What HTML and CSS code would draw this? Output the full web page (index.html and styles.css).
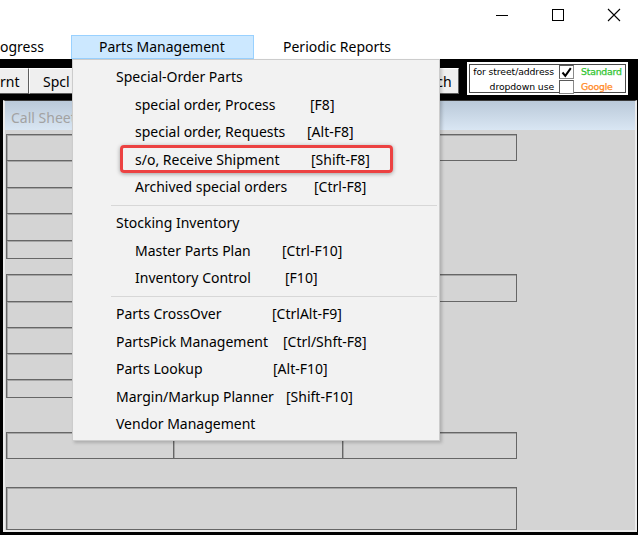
FILE: index.html
```html
<!DOCTYPE html>
<html>
<head>
<meta charset="utf-8">
<link rel="stylesheet" href="styles.css">
</head>
<body>
<div class="app">
  <div class="titlebar">
    <div class="winbtn"><svg width="14" height="14" viewBox="0 0 14 14"><line x1="1" y1="7.5" x2="13" y2="7.5" stroke="#000" stroke-width="1"/></svg></div>
    <div class="winbtn"><svg width="14" height="14" viewBox="0 0 14 14"><rect x="1.5" y="1.5" width="11" height="11" fill="none" stroke="#000" stroke-width="1"/></svg></div>
    <div class="winbtn"><svg width="14" height="14" viewBox="0 0 14 14"><path d="M1 1 L13 13 M13 1 L1 13" stroke="#000" stroke-width="1.1" fill="none"/></svg></div>
  </div>

  <div class="menubar">
    <div class="mb-item mb-first">ogress</div>
    <div class="mb-item mb-active">Parts Management</div>
    <div class="mb-item mb-last">Periodic Reports</div>
  </div>

  <div class="toolbar">
    <div class="tbtn tbtn-prnt">rnt</div>
    <div class="tbtn tbtn-spcl">Spcl</div>
    <div class="tb-spacer"></div>
    <div class="tbtn tbtn-search">Search</div>
    <div class="addr">
      <div class="addr-in">
        <div class="addr-txt">for street/address</div>
        <div class="chk"><svg width="11" height="11" viewBox="0 0 11 11"><path d="M1.5 5.5 L4.3 8.8 L9.8 1.2" stroke="#000" stroke-width="2" fill="none"/></svg></div>
        <div class="addr-std">Standard</div>
        <div class="addr-txt">dropdown use</div>
        <div class="chk"></div>
        <div class="addr-ggl">Google</div>
      </div>
    </div>
  </div>

  <div class="mdi">
    <div class="child">
      <div class="child-title">Call Sheet</div>
      <div class="child-body">
        <div class="grp g1">
          <div class="fld wide h27"></div>
          <div class="fld narrow h28"></div>
          <div class="fld narrow h27"></div>
          <div class="fld narrow h28"></div>
          <div class="fld narrow h19"></div>
        </div>
        <div class="grp g2">
          <div class="fld wide h28"></div>
          <div class="fld narrow h27"></div>
          <div class="fld narrow h27"></div>
          <div class="fld narrow h27"></div>
          <div class="fld narrow h19"></div>
        </div>
        <div class="grp g3">
          <div class="fld c1 h27"></div>
          <div class="fld c2 h27"></div>
          <div class="fld c3 h27"></div>
        </div>
        <div class="grp g4">
          <div class="fld wide h43"></div>
        </div>
      </div>
    </div>
  </div>

  <div class="dropdown">
    <div class="mi">Special-Order Parts</div>
    <div class="mi sub"><span class="lbl w175">special order, Process</span><span>[F8]</span></div>
    <div class="mi sub"><span class="lbl w172">special order, Requests</span><span>[Alt-F8]</span></div>
    <div class="mi sub"><span class="lbl w176">s/o, Receive Shipment</span><span>[Shift-F8]</span></div>
    <div class="mi sub"><span class="lbl w179">Archived special orders</span><span>[Ctrl-F8]</span></div>
    <div class="sep"></div>
    <div class="mi">Stocking Inventory</div>
    <div class="mi sub"><span class="lbl w147">Master Parts Plan</span><span>[Ctrl-F10]</span></div>
    <div class="mi sub"><span class="lbl w150">Inventory Control</span><span>[F10]</span></div>
    <div class="sep"></div>
    <div class="mi"><span class="lbl w156">Parts CrossOver</span><span>[CtrlAlt-F9]</span></div>
    <div class="mi"><span class="lbl w167">PartsPick Management</span><span>[Ctrl/Shft-F8]</span></div>
    <div class="mi"><span class="lbl w157">Parts Lookup</span><span>[Alt-F10]</span></div>
    <div class="mi"><span class="lbl w170">Margin/Markup Planner</span><span>[Shift-F10]</span></div>
    <div class="mi">Vendor Management</div>
    <div class="callout"></div>
  </div>
</div>
</body>
</html>
```
FILE: styles.css
```css
* { box-sizing: border-box; }
html, body { margin: 0; padding: 0; }
body {
  width: 638px;
  height: 535px;
  overflow: hidden;
  background: #000;
  font-family: "Noto Sans", sans-serif;
  font-size: 14px;
  color: #000;
}
.app { position: relative; width: 638px; height: 535px; overflow: hidden; }

/* title bar */
.titlebar {
  height: 35px;
  background: #fff;
  display: flex;
  justify-content: flex-end;
  margin-right: -4px;
}
.winbtn {
  width: 56px;
  height: 30px;
  display: flex;
  align-items: center;
  justify-content: center;
}
.winbtn svg { display: block; }

/* menu bar */
.menubar {
  height: 24px;
  background: #fff;
  display: flex;
  font-size: 14px;
}
.mb-item {
  display: flex;
  align-items: center;
  border: 1px solid transparent;
  white-space: nowrap;
  padding-bottom: 1px;
}
.mb-first { width: 72px; margin-left: -1px; padding-left: 0; }
.mb-active {
  width: 183px;
  padding-left: 27px;
  background: #cce8ff;
  border-color: #99d1ff;
}
.mb-last { padding-left: 28px; }

/* toolbar */
.toolbar {
  height: 41px;
  background: #000;
  display: flex;
  align-items: flex-start;
}
.tbtn {
  margin-top: 9px;
  height: 26px;
  background: #efefef;
  border: 1px solid;
  border-color: #fdfdfd #5e5e5e #5e5e5e #fdfdfd;
  display: flex;
  align-items: center;
  white-space: nowrap;
  overflow: hidden;
  font-size: 14px;
}
.tbtn-prnt { width: 30px; margin-left: -1px; padding-left: 0; }
.tbtn-spcl { width: 80px; padding-left: 13px; }
.tb-spacer { flex: 1; }
.tbtn-search { width: 59px; justify-content: center; }
.addr {
  margin-left: 8px;
  margin-right: 10px;
  margin-top: 3px;
  width: 161px;
  height: 33px;
  background: #fff;
  padding: 2px;
}
.addr-in {
  height: 100%;
  border: 1px solid #4a4a4a;
  display: grid;
  grid-template-columns: 84px 15px 1fr;
  grid-template-rows: 14px 14px;
  column-gap: 0;
  row-gap: 1px;
  align-items: center;
  font-family: "DejaVu Sans", sans-serif;
  font-size: 9.3px;
  line-height: 10px;
}
.addr-txt { text-align: right; padding-right: 0; white-space: nowrap; letter-spacing: -0.1px; }
.chk {
  margin-left: 5px;
  width: 15px;
  height: 14px;
  border: 1px solid #8a8a8a;
  border-top-color: #5a5a5a;
  border-left-color: #5a5a5a;
  background: #fff;
  display: flex;
  align-items: center;
  justify-content: center;
}
.addr-std, .addr-ggl { padding-left: 12px; white-space: nowrap; letter-spacing: -0.2px; -webkit-text-stroke: 0.25px; }
.addr-std { color: #2fc42f; }
.addr-ggl { color: #ff8a26; }

/* MDI area */
.mdi {
  height: 435px;
  background: #000;
  padding: 0 1px 3px 3px;
}
.child {
  width: 634px;
  height: 432px;
  border: 2px solid #ebebeb;
  border-top: 1px solid #3a3a3a;
  display: flex;
  flex-direction: column;
}
.child-title {
  height: 29px;
  background: linear-gradient(#bac9d9, #d9e6f3);
  color: #a2a2a2;
  font-size: 14px;
  line-height: 20px;
  padding: 7px 0 0 6px;
  white-space: nowrap;
}
.child-body {
  flex: 1;
  background: #d4d4d4;
  padding: 4px 0 0 1px;
  display: flex;
  flex-direction: column;
}
.grp { display: flex; flex-direction: column; }
.g2 { margin-top: 15px; }
.g3 { margin-top: 34px; flex-direction: row; }
.g4 { margin-top: 28px; }
.fld {
  border: 1px solid #666;
  box-shadow: inset 1px 1px 0 #a5a5a5;
  background: #d4d4d4;
}
.g1 .fld + .fld, .g2 .fld + .fld { margin-top: -1px; }
.g3 .fld + .fld { margin-left: -1px; }
.wide { width: 511px; }
.narrow { width: 300px; }
.c1 { width: 168px; }
.c2 { width: 170px; }
.c3 { width: 175px; }
.h19 { height: 19px; }
.h27 { height: 27px; }
.h28 { height: 28px; }
.h43 { height: 43px; }

/* dropdown menu */
.dropdown {
  position: absolute;
  left: 72px;
  top: 59px;
  width: 368px;
  background: #f2f2f2;
  border: 1px solid #cccccc;
  padding: 3px 0 2px;
  box-shadow: 2px 2px 3px rgba(0, 0, 0, 0.18);
}
.mi {
  height: 27.5px;
  display: flex;
  align-items: center;
  padding-left: 43px;
  white-space: nowrap;
  font-size: 14px;
}
.mi.sub { padding-left: 62px; }
.lbl { display: inline-block; }
.w147 { width: 147px; }
.w150 { width: 150px; }
.w156 { width: 156px; }
.w157 { width: 157px; }
.w167 { width: 167px; }
.w170 { width: 170px; }
.w172 { width: 172px; }
.w175 { width: 175px; }
.w176 { width: 176px; }
.w179 { width: 179px; }
.sep {
  height: 1px;
  background: #d7d7d7;
  margin: 4px 2px 3.5px 38px;
}
.callout {
  position: absolute;
  left: 47px;
  top: 85px;
  width: 273px;
  height: 28px;
  border: 3px solid #ec4242;
  border-radius: 4px;
  box-shadow: 0 1px 4px rgba(0, 0, 0, 0.35);
}
```
